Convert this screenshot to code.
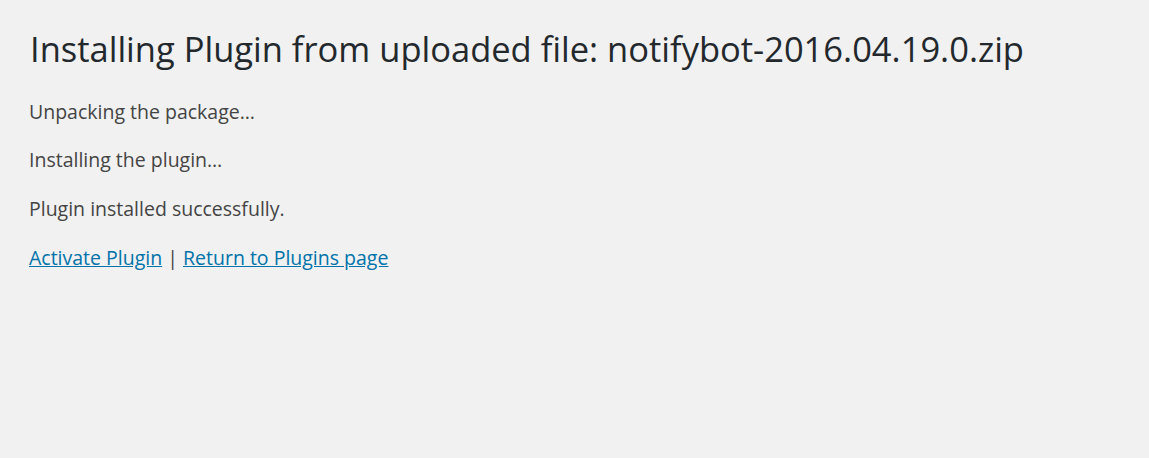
export default function App() {
  return (
    <main
      className="min-h-screen w-full bg-[#f1f1f1] px-[30px] pt-[27px] text-[#444]"
      style={{ fontFamily: '"Open Sans", "Liberation Sans", sans-serif' }}
    >
      <h1 className="text-[34.5px] leading-[1.3] font-normal text-[#23282d] mb-[25px]">
        Installing Plugin from uploaded file: notifybot-2016.04.19.0.zip
      </h1>
      <p className="text-[19.5px] leading-[1.5] my-[19.4px] -ml-px">Unpacking the package&hellip;</p>
      <p className="text-[19.5px] leading-[1.5] my-[19.4px] -ml-px">Installing the plugin&hellip;</p>
      <p className="text-[19.5px] leading-[1.5] my-[19.4px] -ml-px">Plugin installed successfully.</p>
      <p className="text-[19.5px] leading-[1.5] my-[19.4px] -ml-px">
        <a href="#" className="text-[#0073aa] underline">Activate Plugin</a>
        {' | '}
        <a href="#" className="text-[#0073aa] underline">Return to Plugins page</a>
      </p>
    </main>
  );
}
